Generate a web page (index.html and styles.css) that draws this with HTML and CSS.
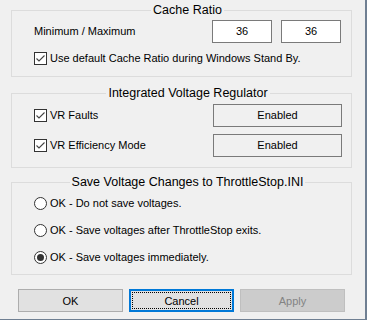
FILE: index.html
```html
<!DOCTYPE html>
<html>
<head>
    <meta charset="UTF-8">
    <title>ThrottleStop Options</title>
    <link rel="stylesheet" href="styles.css">
</head>
<body>
    <div class="window">
        <div class="group group-cache">
            <div class="group-title">Cache Ratio</div>
            <div class="ratio-row">
                <span class="label">Minimum / Maximum</span>
                <div class="inputs">
                    <div class="text-box">36</div>
                    <div class="text-box">36</div>
                </div>
            </div>
            <div class="check-row check-standby">
                <span class="checkbox">
                    <svg width="11" height="11" viewBox="0 0 11 11"><polyline points="1.5,5.5 4,8 9.5,2.5" fill="none" stroke="#444" stroke-width="1.1"/></svg>
                </span>
                <span class="label">Use default Cache Ratio during Windows Stand By.</span>
            </div>
        </div>

        <div class="group group-ivr">
            <div class="group-title">Integrated Voltage Regulator</div>
            <div class="ivr-row first">
                <div class="check-row">
                    <span class="checkbox">
                        <svg width="11" height="11" viewBox="0 0 11 11"><polyline points="1.5,5.5 4,8 9.5,2.5" fill="none" stroke="#444" stroke-width="1.1"/></svg>
                    </span>
                    <span class="label">VR Faults</span>
                </div>
                <div class="state-btn">Enabled</div>
            </div>
            <div class="ivr-row">
                <div class="check-row">
                    <span class="checkbox">
                        <svg width="11" height="11" viewBox="0 0 11 11"><polyline points="1.5,5.5 4,8 9.5,2.5" fill="none" stroke="#444" stroke-width="1.1"/></svg>
                    </span>
                    <span class="label">VR Efficiency Mode</span>
                </div>
                <div class="state-btn">Enabled</div>
            </div>
        </div>

        <div class="group group-save">
            <div class="group-title">Save Voltage Changes to ThrottleStop.INI</div>
            <div class="radio-list">
                <div class="check-row">
                    <span class="radio"></span>
                    <span class="label">OK - Do not save voltages.</span>
                </div>
                <div class="check-row">
                    <span class="radio"></span>
                    <span class="label">OK - Save voltages after ThrottleStop exits.</span>
                </div>
                <div class="check-row">
                    <span class="radio selected"></span>
                    <span class="label">OK - Save voltages immediately.</span>
                </div>
            </div>
        </div>

        <div class="buttons">
            <button class="dlg-btn">OK</button>
            <button class="dlg-btn focused">Cancel</button>
            <button class="dlg-btn disabled">Apply</button>
        </div>
    </div>
</body>
</html>
```

FILE: styles.css
```css
* {
    margin: 0;
    padding: 0;
    box-sizing: border-box;
}

body {
    font-family: 'Liberation Sans', Arial, sans-serif;
    font-size: 11px;
    color: #000;
    background: #fff;
}

.window {
    width: 367px;
    height: 320px;
    background: #f0f0f0;
    border-right: 2px solid #6f7f92;
    border-bottom: 1px solid #6f7f92;
    padding-top: 10px;
}

.group {
    width: 341px;
    margin-left: 11px;
    border: 1px solid #dcdcdc;
}

.group-title {
    width: fit-content;
    margin: -10px auto 0;
    padding: 0 2px;
    background: #f0f0f0;
    font-size: 12.5px;
    line-height: 18px;
    height: 18px;
}

.label {
    white-space: nowrap;
    line-height: 13px;
}

/* Cache ratio */
.group-cache {
    padding: 0 10px 11px 22px;
}

.ratio-row {
    display: flex;
    align-items: center;
    justify-content: space-between;
    margin-top: 1px;
}

.inputs {
    display: flex;
    gap: 9px;
}

.text-box {
    width: 60px;
    height: 23px;
    background: #fff;
    border: 1px solid #7a7a7a;
    text-align: center;
    line-height: 21px;
}

.check-standby {
    margin-top: 9px;
}

.check-row {
    display: flex;
    align-items: center;
    height: 13px;
    gap: 3px;
}

.checkbox {
    width: 13px;
    height: 13px;
    border: 1px solid #333;
    background: #fff;
    display: flex;
    flex-shrink: 0;
}

/* Integrated voltage regulator */
.group-ivr {
    margin-top: 16px;
    padding: 0 9px 10px 22px;
}

.ivr-row {
    display: flex;
    align-items: center;
    justify-content: space-between;
    margin-top: 7px;
}

.ivr-row.first {
    margin-top: 2px;
}

.state-btn {
    width: 129px;
    height: 23px;
    border: 1px solid #7a7a7a;
    background: #f0f0f0;
    text-align: center;
    line-height: 21px;
}

/* Save voltages */
.group-save {
    margin-top: 14px;
    padding: 0 10px 10px 22px;
}

.radio-list {
    display: flex;
    flex-direction: column;
    gap: 14px;
    margin-top: 6px;
}

.radio {
    width: 13px;
    height: 13px;
    border: 1px solid #333;
    border-radius: 50%;
    background: #fff;
    flex-shrink: 0;
    display: flex;
    align-items: center;
    justify-content: center;
}

.radio.selected::after {
    content: '';
    width: 7px;
    height: 7px;
    border-radius: 50%;
    background: #333;
}

/* Dialog buttons */
.buttons {
    display: flex;
    gap: 6px;
    margin: 14px 0 0 18px;
}

.dlg-btn {
    width: 105px;
    height: 23px;
    font-family: inherit;
    font-size: 11px;
    background: #e1e1e1;
    border: 1px solid #adadad;
    color: #000;
}

.dlg-btn.focused {
    border: 1px solid #0078d7;
    box-shadow: inset 0 0 0 1px #0078d7;
    outline: 1px dotted #000;
    outline-offset: -4px;
}

.dlg-btn.disabled {
    background: #cccccc;
    border-color: #bfbfbf;
    color: #838383;
}
```
